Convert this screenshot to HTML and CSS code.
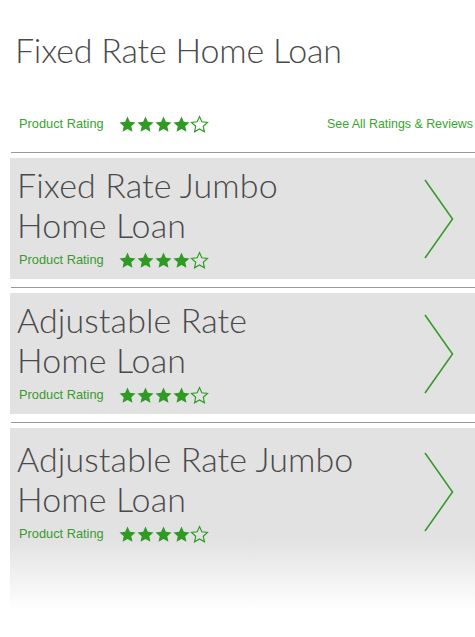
FILE: index.html
```html
<!DOCTYPE html>
<html>
<head>
<meta charset="utf-8">
<link rel="stylesheet" href="styles.css">
</head>
<body>
<svg width="0" height="0" class="defs">
  <defs>
    <path id="star" d="M9 0.6 L11.47 6.1 L17.5 6.72 L12.99 10.8 L14.25 16.7 L9 13.7 L3.75 16.7 L5.01 10.8 L0.5 6.72 L6.53 6.1 Z"/>
  </defs>
</svg>
<div class="page">
  <h1 class="title">Fixed Rate Home Loan</h1>
  <div class="summary">
    <div class="rating">
      <span class="rating-label">Product Rating</span>
      <span class="stars">
        <svg viewBox="0 0 18 17.4" class="star"><use href="#star"/></svg>
        <svg viewBox="0 0 18 17.4" class="star"><use href="#star"/></svg>
        <svg viewBox="0 0 18 17.4" class="star"><use href="#star"/></svg>
        <svg viewBox="0 0 18 17.4" class="star"><use href="#star"/></svg>
        <svg viewBox="0 0 18 17.4" class="star empty"><use href="#star"/></svg>
      </span>
    </div>
    <a class="see-all">See All Ratings &amp; Reviews</a>
  </div>

  <div class="rule"></div>
  <div class="card">
    <div class="card-body">
      <div class="card-title">Fixed Rate Jumbo<br>Home Loan</div>
      <div class="rating card-rating">
        <span class="rating-label">Product Rating</span>
        <span class="stars">
          <svg viewBox="0 0 18 17.4" class="star"><use href="#star"/></svg>
          <svg viewBox="0 0 18 17.4" class="star"><use href="#star"/></svg>
          <svg viewBox="0 0 18 17.4" class="star"><use href="#star"/></svg>
          <svg viewBox="0 0 18 17.4" class="star"><use href="#star"/></svg>
          <svg viewBox="0 0 18 17.4" class="star empty"><use href="#star"/></svg>
        </span>
      </div>
    </div>
    <svg class="chevron" viewBox="0 0 30 80"><polyline points="1,1 28.5,40 1,79"/></svg>
  </div>

  <div class="rule"></div>
  <div class="card">
    <div class="card-body">
      <div class="card-title">Adjustable Rate<br>Home Loan</div>
      <div class="rating card-rating">
        <span class="rating-label">Product Rating</span>
        <span class="stars">
          <svg viewBox="0 0 18 17.4" class="star"><use href="#star"/></svg>
          <svg viewBox="0 0 18 17.4" class="star"><use href="#star"/></svg>
          <svg viewBox="0 0 18 17.4" class="star"><use href="#star"/></svg>
          <svg viewBox="0 0 18 17.4" class="star"><use href="#star"/></svg>
          <svg viewBox="0 0 18 17.4" class="star empty"><use href="#star"/></svg>
        </span>
      </div>
    </div>
    <svg class="chevron" viewBox="0 0 30 80"><polyline points="1,1 28.5,40 1,79"/></svg>
  </div>

  <div class="rule"></div>
  <div class="card card-last">
    <div class="card-body">
      <div class="card-title">Adjustable Rate Jumbo<br>Home Loan</div>
      <div class="rating card-rating">
        <span class="rating-label">Product Rating</span>
        <span class="stars">
          <svg viewBox="0 0 18 17.4" class="star"><use href="#star"/></svg>
          <svg viewBox="0 0 18 17.4" class="star"><use href="#star"/></svg>
          <svg viewBox="0 0 18 17.4" class="star"><use href="#star"/></svg>
          <svg viewBox="0 0 18 17.4" class="star"><use href="#star"/></svg>
          <svg viewBox="0 0 18 17.4" class="star empty"><use href="#star"/></svg>
        </span>
      </div>
    </div>
    <svg class="chevron" viewBox="0 0 30 80"><polyline points="1,1 28.5,40 1,79"/></svg>
  </div>
</div>
</body>
</html>
```

FILE: styles.css
```css
* { box-sizing: border-box; }
html, body { margin: 0; padding: 0; background: #fff; }
body { font-family: "Liberation Sans", Arial, sans-serif; overflow: hidden; }
.defs { position: absolute; width: 0; height: 0; }

.page { width: 475px; padding-top: 30px; }

.title {
  margin: 0 0 0 15px;
  font-family: Lato, "Open Sans", sans-serif;
  font-weight: 300;
  font-size: 34px;
  line-height: 40px;
  color: #4a4a4a;
  letter-spacing: -0.2px;
}

.summary {
  display: flex;
  justify-content: space-between;
  align-items: center;
  height: 18px;
  margin-top: 45px;
  padding-left: 19px;
  padding-right: 2px;
}

.rating { display: flex; align-items: center; }
.rating-label {
  width: 100px;
  font-size: 12.8px;
  line-height: 18px;
  color: #38a52c;
}
.see-all {
  font-size: 12.4px;
  line-height: 18px;
  color: #38a52c;
}
.stars { display: flex; gap: 1px; }
.star { width: 17px; height: 16.5px; display: block; overflow: visible; }
.star use { fill: #2f9a24; }
.star.empty use { fill: none; stroke: #2f9a24; stroke-width: 1.2; }

.rule {
  height: 1px;
  background: #9a9a9a;
  margin-left: 11px;
}
.summary + .rule { margin-top: 19px; }

.card {
  margin: 5px 0 0 10px;
  height: 121px;
  background: #e2e2e2;
  display: flex;
  align-items: center;
  justify-content: space-between;
  padding-right: 21px;
}
.card + .rule { margin-top: 8px; }

.card-body { padding-left: 7px; align-self: flex-start; padding-top: 7px; }
.card-title {
  font-family: Lato, "Open Sans", sans-serif;
  font-weight: 300;
  font-size: 34px;
  line-height: 40px;
  color: #4a4a4a;
  letter-spacing: 0.1px;
}
.card-rating { margin-top: 6px; padding-left: 2px; }
.card-rating .rating-label { color: #3a9a2e; }

.chevron { width: 30px; height: 80px; display: block; }
.chevron polyline { fill: none; stroke: #3a9a2e; stroke-width: 1.6; }

.card-last {
  height: 190px;
  align-items: flex-start;
  background: linear-gradient(to bottom, #e2e2e2 0, #e2e2e2 112px, #ffffff 182px);
}
.card-last .card-body { padding-top: 11px; }
.card-last .chevron { margin-top: 24px; }
```
